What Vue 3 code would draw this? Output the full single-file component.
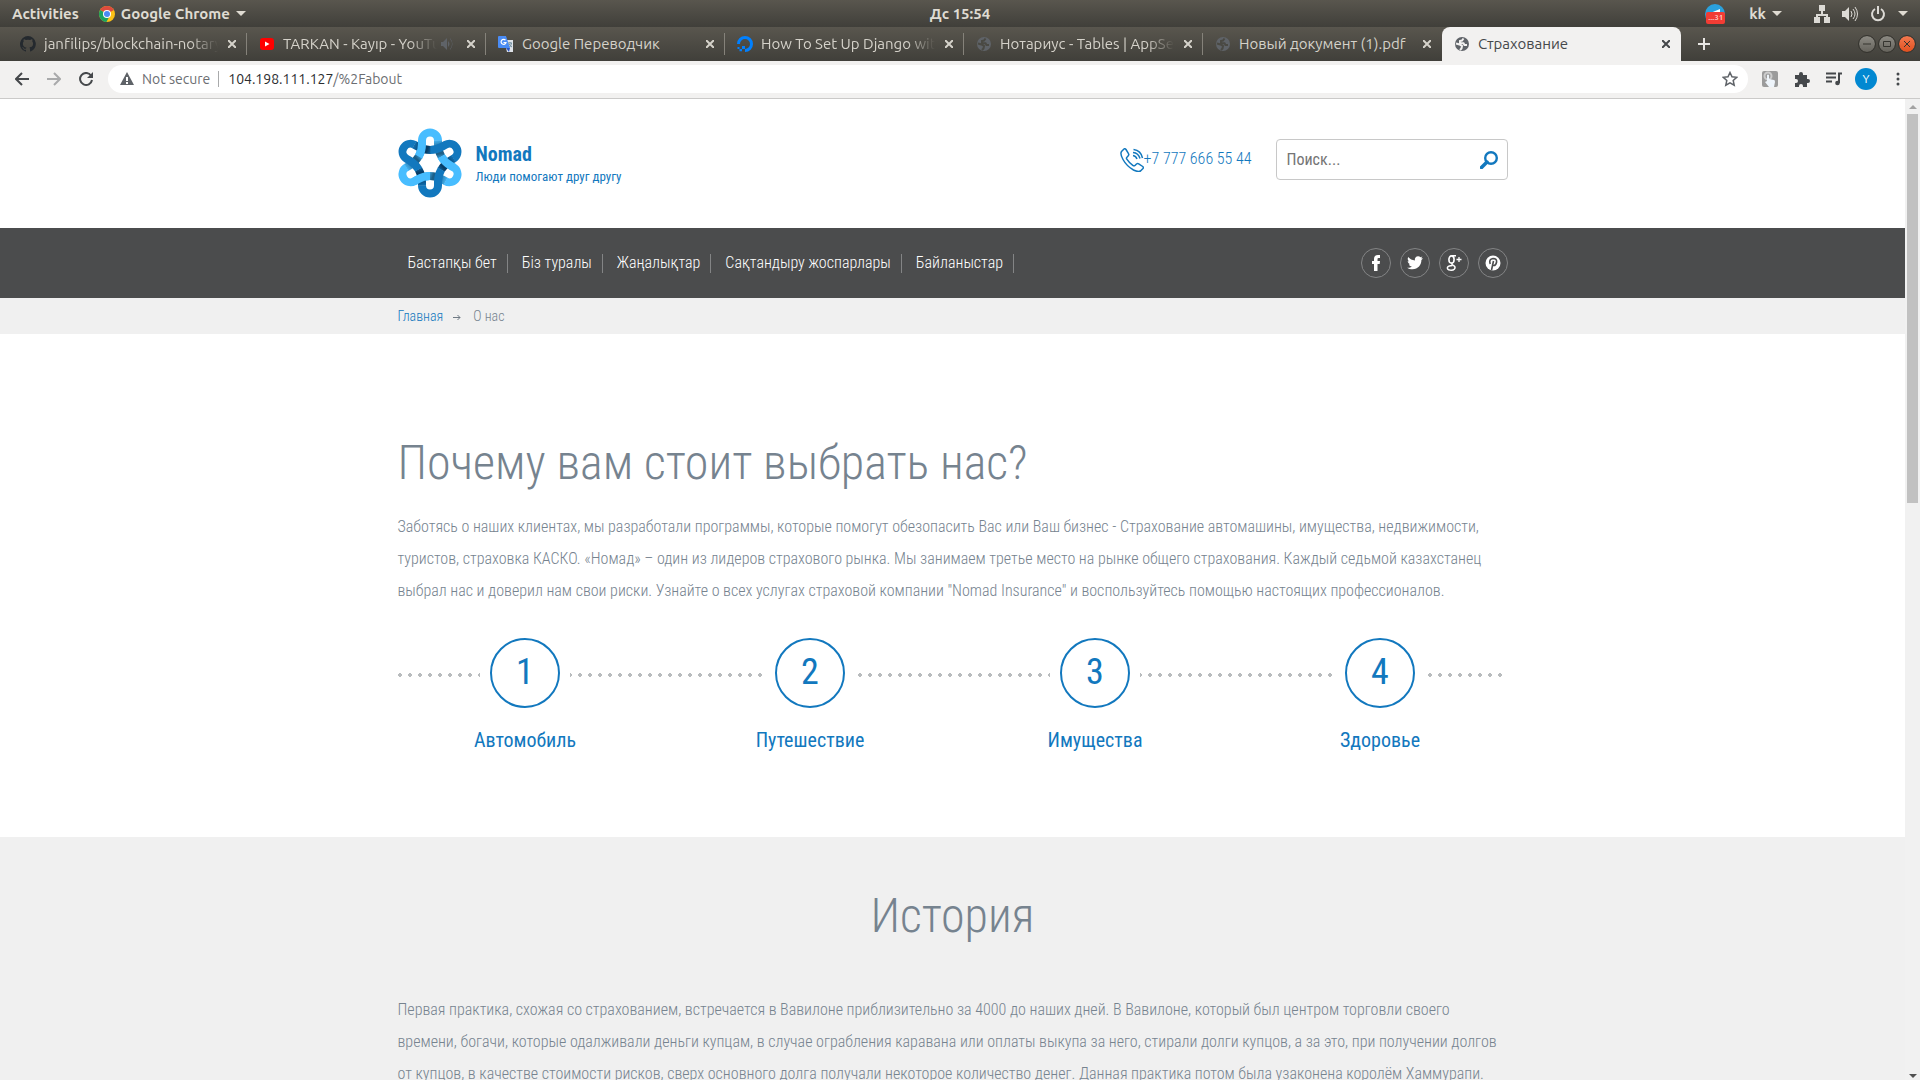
<script setup>
const tabs = [
  { title: 'janfilips/blockchain-notary', icon: 'github', fade: true },
  { title: 'TARKAN - Kayıp - YouTube', icon: 'youtube', audio: true, fade: true },
  { title: 'Google Переводчик', icon: 'translate' },
  { title: 'How To Set Up Django with', icon: 'ocean', fade: true },
  { title: 'Нотариус - Tables | AppSeed', icon: 'globe', fade: true },
  { title: 'Новый документ (1).pdf', icon: 'globe' },
  { title: 'Страхование', icon: 'globe', active: true },
]
const menu = ['Бастапқы бет', 'Біз туралы', 'Жаңалықтар', 'Сақтандыру жоспарлары', 'Байланыстар']
const socials = ['Facebook', 'Twitter', 'Google Plus', 'Pinterest']
const steps = ['Автомобиль', 'Путешествие', 'Имущества', 'Здоровье']
const lobes = [0, 120, 240]
</script>

<template>
  <div class="screen">
    <header class="panel">
      <div class="panel-side">
        <button class="panel-item">Activities</button>
        <button class="panel-item">
          <svg class="chrome" width="16" height="16" viewBox="0 0 16 16">
            <circle cx="8" cy="8" r="8" fill="#fbc116" />
            <path d="M8 8 1.1 4A8 8 0 0 1 14.9 4z" fill="#dd4b3e" />
            <path d="M8 8 1.1 4A8 8 0 0 0 7.4 16L11 9.6z" fill="#1aa260" />
            <circle cx="8" cy="8" r="4" fill="#fff" />
            <circle cx="8" cy="8" r="3" fill="#4a8af4" />
          </svg>
          Google Chrome
          <i class="caret"></i>
        </button>
      </div>
      <time class="clock">Дс 15:54</time>
      <div class="panel-side panel-right">
        <span class="telegram">
          <svg width="20" height="20" viewBox="0 0 20 20">
            <circle cx="10" cy="10" r="10" fill="#2ba1dc" />
            <path d="M3 10 15 5v6H7z" fill="#fff" />
          </svg>
          <b class="count">...31</b>
        </span>
        <button class="panel-item lang">kk <i class="caret"></i></button>
        <svg class="net" width="16" height="18" viewBox="0 0 16 18" fill="#dcdad5">
          <path d="M5 0h6v6H9v3h5v3h2v6h-6v-6h2v-1H4v1h2v6H0v-6h2V9h5V6H5z" />
        </svg>
        <svg class="vol" width="16" height="16" viewBox="0 0 16 16" fill="none" stroke="#dcdad5" stroke-width="1">
          <path d="M0 5h3l4-4v14l-4-4H0z" fill="#dcdad5" stroke="none" />
          <path d="M9 5q2 3 0 6M11 3q4 5 0 10M13 1q5 7 0 14" />
        </svg>
        <svg class="power" width="16" height="16" viewBox="0 0 16 16" fill="none" stroke="#dcdad5" stroke-width="2">
          <path d="M5 3a6 6 0 1 0 6 0M8 0v8" />
        </svg>
        <i class="caret"></i>
      </div>
    </header>

    <div class="tabstrip">
      <div v-for="tab in tabs" :key="tab.title" class="tab" :class="{ active: tab.active }">
        <svg v-if="tab.icon === 'github'" class="fav" viewBox="0 0 16 16" fill="#24292e">
          <path d="M8 0a8 8 0 0 0-2.5 15.6c.4.1.5-.2.5-.4v-1.4c-2.2.5-2.7-1-2.7-1-.4-1-.9-1.200-.9-1.200-.7-.5.1-.5.1-.5.8.1 1.200.8 1.200.8.7 1.300 1.900.9 2.300.7.1-.5.3-.9.5-1.100-1.800-.2-3.600-.9-3.600-4 0-.9.3-1.600.8-2.100-.1-.2-.4-1 .1-2.100 0 0 .7-.2 2.200.8a7.600 7.600 0 0 1 4 0c1.500-1 2.200-.8 2.200-.8.4 1.100.2 1.900.1 2.100.5.6.8 1.300.8 2.100 0 3.100-1.900 3.700-3.700 3.900.3.300.6.8.6 1.500v2.200c0 .2.1.5.6.4A8 8 0 0 0 8 0z" />
        </svg>
        <svg v-else-if="tab.icon === 'youtube'" class="fav" viewBox="0 0 16 16">
          <rect x="1" y="2" width="14" height="12" rx="3" fill="#f00" />
          <path d="M6 5.500 10.500 8 6 10.500z" fill="#fff" />
        </svg>
        <svg v-else-if="tab.icon === 'translate'" class="fav" viewBox="0 0 16 16">
          <path d="M6 4h9v12H9z" fill="#dfe3e8" />
          <path d="M0 1q0-1 1-1h7l4 12H1q-1 0-1-1z" fill="#4a8cf5" />
          <path d="m8 12 3 4 1-4z" fill="#2a56c6" />
          <path d="M7.500 4.200A2.500 2.500 0 1 0 8 6.500H5.500" fill="none" stroke="#fff" stroke-width="1.200" />
          <path d="M10 7h4M12 6v1M13.500 7q-.5 3-2 4M11 8q1 2 3 3" fill="none" stroke="#6b8a9c" />
        </svg>
        <svg v-else-if="tab.icon === 'ocean'" class="fav" viewBox="0 0 16 16" fill="#0080ff">
          <path d="M8 16v-3a5 5 0 1 0-5-5H0a8 8 0 1 1 8 8z" />
          <path d="M5 10h3v3H5zM2.500 13H5v2.200H2.500zM.5 11h2v2h-2z" />
        </svg>
        <svg v-else class="fav" viewBox="0 0 16 16">
          <circle cx="8" cy="8" r="7" fill="#5f6368" />
          <path class="land" d="M9.500 2.500 8 4.500 6 5v2.200h3.500L10.500 9H13M2 7.500l3.500 1 2.500 1.500-.5 2.500L6 14" />
        </svg>
        <span class="tab-title" :class="{ fade: tab.fade }">{{ tab.title }}</span>
        <svg v-if="tab.audio" class="audio" width="12" height="12" viewBox="0 0 12 12" fill="#5f6368">
          <path d="M0 4h2l4-4v12L2 8H0zM7 3q3 3 0 6zM9 0q5 6 0 12l0-1q4-5 0-10z" />
        </svg>
        <button class="close" aria-label="Close tab">
          <svg width="8" height="8" viewBox="0 0 8 8"><path d="m0 0 8 8M8 0 0 8" /></svg>
        </button>
      </div>
      <button class="new-tab" aria-label="New tab">
        <svg width="12" height="12" viewBox="0 0 12 12"><path d="M6 0v12M0 6h12" stroke="#e8e6e3" stroke-width="2" /></svg>
      </button>
      <div class="window-buttons">
        <button aria-label="Minimize"><svg viewBox="0 0 16 16"><path d="M4 8h8" /></svg></button>
        <button aria-label="Maximize"><svg viewBox="0 0 16 16"><path d="M4.500 5.500h7v5h-7z" /></svg></button>
        <button class="quit" aria-label="Close"><svg viewBox="0 0 16 16"><path d="m5 5 6 6M11 5l-6 6" /></svg></button>
      </div>
    </div>

    <div class="toolbar">
      <button aria-label="Back"><svg class="line" width="14" height="14" viewBox="0 0 14 14"><path d="M14 7H1M7 1 1 7l6 6" /></svg></button>
      <button aria-label="Forward" class="off"><svg class="line" width="14" height="14" viewBox="0 0 14 14"><path d="M0 7h13M7 1l6 6-6 6" /></svg></button>
      <button aria-label="Reload"><svg class="line" width="14" height="14" viewBox="0 0 14 14"><path d="M12 3.500A6 6 0 1 0 13 8" /><path d="M14 0v6H8z" fill="#45484b" stroke="none" /></svg></button>
      <div class="omnibox">
        <svg width="14" height="14" viewBox="0 0 14 14"><path d="M7 0 14 13H0z" fill="#5f6368" /><path d="M7 5v4M7 10v2" stroke="#fff" stroke-width="2" /></svg>
        <span class="insecure">Not secure</span>
        <span class="url"><b>104.198.111.127</b>/%2Fabout</span>
        <svg class="star" width="16" height="16" viewBox="0 0 16 16" fill="none" stroke="#5f6368" stroke-width="1.500"><path d="m8 1.500 2 4.300 4.700.5-3.500 3.200 1 4.700L8 11.800l-4.200 2.400 1-4.700L1.300 6.300 6 5.800z" /></svg>
      </div>
      <button aria-label="Extension">
        <svg width="16" height="16" viewBox="0 0 16 16"><rect width="16" height="16" rx="2" fill="#9b9b9b" /><circle cx="6" cy="5" r="3.500" fill="none" stroke="#ccc" stroke-width="2" /><path d="M5 4q1-1 2 0v4l5 1q1 0 1 2l-1 5H7l-4-5 2-1z" fill="#eef4fa" /></svg>
      </button>
      <button aria-label="Extensions">
        <svg width="16" height="16" viewBox="0 0 16 16"><path d="M1 4h4V3a2 2 0 0 1 4 0v1h4v4h1a2 2 0 0 1 0 4h-1v4H9v-1a2 2 0 0 0-4 0v1H1v-4h1a2 2 0 0 0 0-4H1z" fill="#45484b" /></svg>
      </button>
      <button aria-label="Media">
        <svg class="line" width="16" height="14" viewBox="0 0 16 14"><path d="M0 1.500h10M0 5.500h10M0 9.500h6M13 11V1.500h3" /><circle cx="11.500" cy="11" r="2.300" fill="#45484b" stroke="none" /></svg>
      </button>
      <button class="avatar">Y</button>
      <button aria-label="Menu">
        <svg width="4" height="14" viewBox="0 0 4 14" fill="#45484b"><circle cx="2" cy="2" r="1.500" /><circle cx="2" cy="7" r="1.500" /><circle cx="2" cy="12" r="1.500" /></svg>
      </button>
    </div>

    <div class="viewport">
      <div class="page">
        <div class="container head">
          <a class="brand" href="#">
            <svg class="logo" width="66" height="70" viewBox="-32 -34 66 70" fill="none" stroke-width="8">
              <defs>
                <linearGradient id="shade-light" gradientUnits="userSpaceOnUse" x1="8" y1="-24" x2="12" y2="-3">
                  <stop offset="0" stop-color="#48bdff" /><stop offset=".45" stop-color="#1c5f88" /><stop offset=".7" stop-color="#1c5f88" /><stop offset="1" stop-color="#48bdff" />
                </linearGradient>
                <linearGradient id="shade-dark" gradientUnits="userSpaceOnUse" x1="8" y1="-24" x2="12" y2="-3">
                  <stop offset="0" stop-color="#1278be" /><stop offset=".4" stop-color="#073c66" /><stop offset=".7" stop-color="#073c66" /><stop offset="1" stop-color="#1278be" />
                </linearGradient>
              </defs>
              <g v-for="a in lobes" :key="'l' + a" :transform="`rotate(${a})`">
                <path d="M-11.300-6.500C-8.800-10.800-8-14-8-19V-22.500A8 8 0 0 1 8-22.500" stroke="#48bdff" />
                <path d="M8-22.800V-19C8-14 8.800-10.800 11.500-6.200" stroke="url(#shade-light)" />
              </g>
              <g v-for="a in lobes" :key="'d' + a" :transform="`rotate(${a + 60})`">
                <path d="M-11.300-6.500C-8.800-10.800-8-14-8-19V-22.500A8 8 0 0 1 8-22.500" stroke="#1278be" />
                <path d="M8-22.800V-19C8-14 8.800-10.800 11.500-6.200" stroke="url(#shade-dark)" />
              </g>
              <path v-for="a in lobes" :key="'o' + a" :transform="`rotate(${a})`" d="M-11.300-6.500C-8.800-10.800-8-14-8-19V-22.500" stroke="#48bdff" />
            </svg>
            <span class="brand-text">
              <strong>Nomad</strong>
              <small>Люди помогают друг другу</small>
            </span>
          </a>
          <a class="phone" href="tel:+77776665544">
            <svg width="24" height="24" viewBox="0 0 24 24" fill="none" stroke="#1278be" stroke-width="1.500" stroke-linejoin="round">
              <path d="M4 1 1.500 3.500C.5 5 1 8 3 11.500c2.500 4.500 6 8 10.500 10.500 3 1.500 5.500 1.800 7 1l2.500-2.500c.5-.7.3-1.500-.3-2l-4-2.700c-.8-.5-1.600-.3-2.200.2L15 17.500c-.8.6-1.500.4-2.200-.1-2.300-1.700-4.500-3.900-6-6.200-.5-.8-.5-1.400.1-2L8.300 7.700c.6-.6.7-1.300.2-2L6 1.500C5.500.700 4.700.4 4 1z" />
              <path d="M13 7.500q3 .5 4 3.500M13 4.500q5.500.5 7 6M13.500 1.500q7.500 1 9 8.500" />
            </svg>
            <span>+7 777 666 55 44</span>
          </a>
          <form class="search" @submit.prevent>
            <input type="search" placeholder="Поиск..." aria-label="Поиск" />
            <button aria-label="Найти">
              <svg width="18" height="18" viewBox="0 0 18 18" fill="none" stroke="#1278be"><circle cx="11" cy="7" r="5.800" stroke-width="2.400" /><path d="m7 11-5.500 5.500" stroke-width="3.500" stroke-linecap="round" /></svg>
            </button>
          </form>
        </div>

        <div class="navbar">
          <div class="container nav-row">
            <nav>
              <a v-for="item in menu" :key="item" href="#">{{ item }}</a>
            </nav>
            <div class="socials">
              <a v-for="s in socials" :key="s" href="#" :aria-label="s">
                <svg v-if="s === 'Facebook'" width="16" height="16" viewBox="0 0 16 16"><path d="M6 16V9H4V6h2V4q0-4 4-4h2v3h-1.500Q9.500 3 9.500 4v2H12l-.3 3H9.500v7z" fill="#fff" /></svg>
                <svg v-else-if="s === 'Twitter'" width="16" height="16" viewBox="0 0 16 16"><path d="M16 3.500l-1.600 1.600C14.500 10 11 14.300 5.500 14.300c-2 0-3.800-.5-5.300-1.500 1.800.2 3.400-.3 4.700-1.300-1.400 0-2.600-1-3-2.300h1.400C1.800 8.800.700 7.500.700 6l1.400.4C.8 5.400.3 3.500 1.200 2c1.600 2 4 3.300 6.700 3.400C7.400 3.200 9 1.300 11.100 1.300c1 0 1.800.4 2.400 1l2-.8-1.400 1.800z" fill="#fff" /></svg>
                <svg v-else-if="s === 'Google Plus'" width="16" height="16" viewBox="0 0 16 16" fill="none" stroke="#fff"><ellipse cx="5.500" cy="4.500" rx="2.600" ry="3.600" stroke-width="1.600" /><path d="M6 .8h4M6.500 8q-1.500 1 .5 2.200 3 1.500 1.500 3.700-1.500 1.600-4.500 1.200-3-.5-2.500-2.600.5-1.900 5-2" stroke-width="1.500" /><path d="M13 2v5M10.500 4.500h5" stroke-width="1.300" /></svg>
                <svg v-else width="16" height="16" viewBox="0 0 16 16"><circle cx="8" cy="8" r="7.500" fill="#fff" /><path d="M5.200 9Q3.500 4 8 3.500q4 0 3.600 3.500-.6 3.500-2.800 3.500-1.300-.1-1.300-1.200M8.500 6 6.500 15" fill="none" stroke="#4b4c4d" stroke-width="1.600" /></svg>
              </a>
            </div>
          </div>
        </div>

        <div class="crumbs">
          <div class="container crumb-row">
            <a href="#">Главная</a>
            <svg width="8" height="8" viewBox="0 0 8 8" fill="none" stroke="#6f7a84"><path d="M0 5.500h7M4.500 3 7 5.500 4.500 8" /></svg>
            <span>О нас</span>
          </div>
        </div>

        <section class="why">
          <div class="container">
            <h1>Почему вам стоит выбрать нас?</h1>
            <p>
              Заботясь о наших клиентах, мы разработали программы, которые помогут обезопасить Вас или Ваш бизнес - Страхование автомашины, имущества, недвижимости,
              туристов, страховка КАСКО. «Номад» – один из лидеров страхового рынка. Мы занимаем третье место на рынке общего страхования. Каждый седьмой казахстанец
              выбрал нас и доверил нам свои риски. Узнайте о всех услугах страховой компании "Nomad Insurance" и воспользуйтесь помощью настоящих профессионалов.
            </p>
            <div class="track">
              <ol class="steps">
                <li v-for="(step, i) in steps" :key="step">
                  <span class="gap"><span class="num">{{ i + 1 }}</span></span>
                  <a href="#">{{ step }}</a>
                </li>
              </ol>
            </div>
          </div>
        </section>

        <section class="history">
          <div class="container">
            <h2>История</h2>
            <p>
              Первая практика, схожая со страхованием, встречается в Вавилоне приблизительно за 4000 до наших дней. В Вавилоне, который был центром торговли своего
              времени, богачи, которые одалживали деньги купцам, в случае ограбления каравана или оплаты выкупа за него, стирали долги купцов, а за это, при получении долгов
              от купцов, в качестве стоимости рисков, сверх основного долга получали некоторое количество денег. Данная практика потом была узаконена королём Хаммурапи.
            </p>
          </div>
        </section>
      </div>
      <div class="scrollbar">
        <i class="arrow up"></i>
        <i class="thumb"></i>
        <i class="arrow down"></i>
      </div>
    </div>
  </div>
</template>

<style>
body {
  margin: 0;
}
</style>

<style scoped>
* {
  box-sizing: border-box;
}
button {
  border: 0;
  padding: 0;
  background: none;
  font: inherit;
  color: inherit;
}
a {
  color: inherit;
  text-decoration: none;
}
svg {
  flex: none;
}
.screen {
  display: flex;
  flex-direction: column;
  height: 100vh;
  overflow: hidden;
  font-family: Ubuntu, "Noto Sans", sans-serif;
  font-size: 15px;
  font-variant-ligatures: none;
}

/* desktop panel */
.panel {
  display: flex;
  flex: none;
  align-items: center;
  height: 27px;
  padding: 0 12px;
  background: linear-gradient(#59564e, #403f3a);
  color: #dfdbd2;
  font-weight: 600;
}
.panel-side {
  display: flex;
  flex: 1;
  align-items: center;
  gap: 20px;
}
.panel-right {
  justify-content: flex-end;
  gap: 12px;
}
.panel-item {
  display: flex;
  align-items: center;
  gap: 6px;
}
.lang {
  margin: 0 20px 0 12px;
}
.caret {
  border: 5px solid transparent;
  border-top-color: #dfdbd2;
  border-bottom: 0;
}
.telegram {
  position: relative;
  display: flex;
}
.count {
  position: absolute;
  right: 0;
  bottom: 0;
  padding: 0 2px;
  border-radius: 2px;
  background: #f23c34;
  color: #fff;
  font-size: 8px;
  line-height: 12px;
  font-weight: 400;
}

/* tabs */
.tabstrip {
  display: flex;
  flex: none;
  align-items: center;
  height: 34px;
  padding-left: 8px;
  background: linear-gradient(#59564e, #403f3a);
  color: #d5d2ca;
}
.tab {
  display: flex;
  flex: 0 1 239px;
  min-width: 0;
  height: 22px;
  align-items: center;
  padding: 0 6px 0 12px;
  border-right: 1px solid #85827a;
}
.tab:nth-child(6),
.tab.active {
  border-color: transparent;
}
.tab.active {
  height: 34px;
  border-radius: 8px 8px 0 0;
  background: #f2f1f0;
  color: #45484b;
}
.fav {
  width: 16px;
  height: 16px;
  margin-right: 8px;
}
.land {
  fill: none;
  stroke: #4a4943;
  stroke-width: 2;
}
.active .land {
  stroke: #f2f1f0;
}
.tab-title {
  flex: 1;
  overflow: hidden;
  padding-bottom: 2px;
  white-space: nowrap;
}
.tab-title.fade {
  mask-image: linear-gradient(to left, transparent, #000 28px);
}
.audio {
  margin: 0 4px;
}
.close {
  display: flex;
  padding: 4px;
  margin-left: 6px;
}
.close svg {
  fill: none;
  stroke: currentColor;
  stroke-width: 2;
}
.new-tab {
  display: flex;
  margin-left: 17px;
}
.window-buttons {
  display: flex;
  gap: 4px;
  margin-left: auto;
  padding-right: 5px;
}
.window-buttons button {
  display: flex;
  width: 16px;
  height: 16px;
  border-radius: 50%;
  background: linear-gradient(#8c8a83, #65635c);
  outline: 1px solid #35342f;
}
.window-buttons svg {
  width: 16px;
  fill: none;
  stroke: #35342f;
}
.window-buttons .quit {
  background: linear-gradient(#f4794f, #e0501f);
}

/* toolbar */
.toolbar {
  display: flex;
  flex: none;
  align-items: center;
  height: 38px;
  padding: 0 6px 2px;
  border-bottom: 1px solid #cbcac9;
  background: #f2f1f0;
  font-size: 14px;
}
.toolbar > button {
  display: flex;
  justify-content: center;
  width: 32px;
}
.toolbar .line {
  fill: none;
  stroke: #45484b;
  stroke-width: 2;
}
.toolbar .off .line {
  stroke: #a9aaab;
}
.omnibox {
  display: flex;
  flex: 1;
  align-items: center;
  height: 28px;
  margin: 0 6px;
  padding: 0 10px 0 12px;
  border-radius: 14px;
  background: #fff;
  color: #6b6e72;
}
.insecure {
  margin: 0 9px 0 8px;
  padding: 0 8px 0 0;
  border-right: 1px solid #a9aaab;
  line-height: 16px;
}
.url b {
  color: #2b2d30;
  font-weight: 400;
}
.star {
  margin-left: auto;
}
.toolbar > .avatar {
  width: 22px;
  height: 22px;
  margin: 0 5px;
  border-radius: 50%;
  background: #0288d1;
  color: #fff;
  font-size: 12px;
  line-height: 22px;
}

/* page */
.viewport {
  display: flex;
  flex: 1;
  min-height: 0;
}
.page {
  flex: 1;
  overflow: hidden;
  background: #fff;
  color: #76838f;
  font-family: "Roboto Condensed", "Liberation Sans Narrow", Roboto, sans-serif;
  font-size: 16px;
  font-weight: 300;
}
.container {
  width: 100%;
  max-width: 1140px;
  margin: 0 auto;
  padding: 0 15px;
}
.head {
  display: flex;
  align-items: center;
  height: 129px;
  color: #1278be;
}
.brand {
  display: flex;
  align-items: center;
  gap: 12px;
  margin-right: auto;
}
.logo {
  overflow: visible;
}
.brand-text {
  display: flex;
  flex-direction: column;
  padding-top: 2px;
}
.brand strong {
  font-size: 20px;
  line-height: 24px;
  font-weight: 700;
}
.brand small {
  font-size: 13px;
  line-height: 22px;
  font-weight: 400;
}
.phone {
  display: flex;
  align-items: center;
  margin: 0 24px 8px 0;
}
.phone span {
  padding-bottom: 2px;
}
.search {
  display: flex;
  align-items: center;
  width: 232px;
  height: 41px;
  margin-bottom: 8px;
  padding: 0 9px 0 10px;
  border: 1px solid #c8c8c8;
  border-radius: 4px;
}
.search input {
  flex: 1;
  min-width: 0;
  padding: 0;
  border: 0;
  outline: 0;
  background: none;
  font: inherit;
  font-weight: 400;
}
.search input::placeholder {
  color: #757575;
}
.search button {
  display: flex;
}
.navbar {
  background: #4b4c4d;
  color: #fff;
}
.nav-row {
  display: flex;
  align-items: center;
  justify-content: space-between;
  height: 70px;
}
nav {
  display: flex;
  gap: 4px;
}
nav a {
  height: 19px;
  padding: 0 10px;
  border-right: 1px solid #838485;
  line-height: 17px;
}
.socials {
  display: flex;
  gap: 9px;
}
.socials a {
  display: flex;
  align-items: center;
  justify-content: center;
  width: 30px;
  height: 30px;
  border: 1px solid #838485;
  border-radius: 50%;
}
.crumbs {
  background: #f0f0f0;
}
.crumb-row {
  display: flex;
  align-items: center;
  gap: 10px;
  height: 36px;
  font-size: 14px;
}
.crumb-row a {
  color: #1278be;
}
.crumb-row span {
  margin-left: 2px;
}
h1,
h2 {
  margin: 0;
  font-size: 48px;
  line-height: 60px;
  font-weight: 300;
}
p {
  margin: 0;
  line-height: 32px;
}
.why {
  padding: 99px 0 85px;
}
.why p {
  margin-top: 18px;
}
.track {
  margin-top: 31px;
  background: radial-gradient(circle, #b9bcbe 2px, transparent 2px) -3px 32px / 10px 10px repeat-x;
}
.steps {
  display: flex;
  margin: 0 -15px;
  padding: 0;
  list-style: none;
}
.steps li {
  display: flex;
  flex: 1;
  flex-direction: column;
  align-items: center;
  gap: 20px;
  color: #1278be;
  font-size: 20px;
  line-height: 24px;
  font-weight: 400;
}
.gap {
  padding: 0 10px;
  background: #fff;
}
.num {
  display: block;
  width: 70px;
  height: 70px;
  border: 2px solid #1278be;
  border-radius: 50%;
  font-size: 36px;
  line-height: 64px;
  text-align: center;
}
.history {
  min-height: 300px;
  padding-top: 49px;
  background: #f0f0f0;
}
.history h2 {
  text-align: center;
}
.history p {
  margin-top: 48px;
}

/* scrollbar */
.scrollbar {
  display: flex;
  flex: none;
  flex-direction: column;
  align-items: center;
  width: 15px;
  padding: 6px 0 2px;
  background: #f1f1f1;
}
.arrow {
  border: 4px solid transparent;
}
.up {
  border-top: 0;
  border-bottom-color: #a3a3a3;
}
.down {
  margin-top: auto;
  border-bottom: 0;
  border-top-color: #505050;
}
.thumb {
  width: 11px;
  height: 40%;
  margin-top: 5px;
  background: #c1c1c1;
}
</style>
